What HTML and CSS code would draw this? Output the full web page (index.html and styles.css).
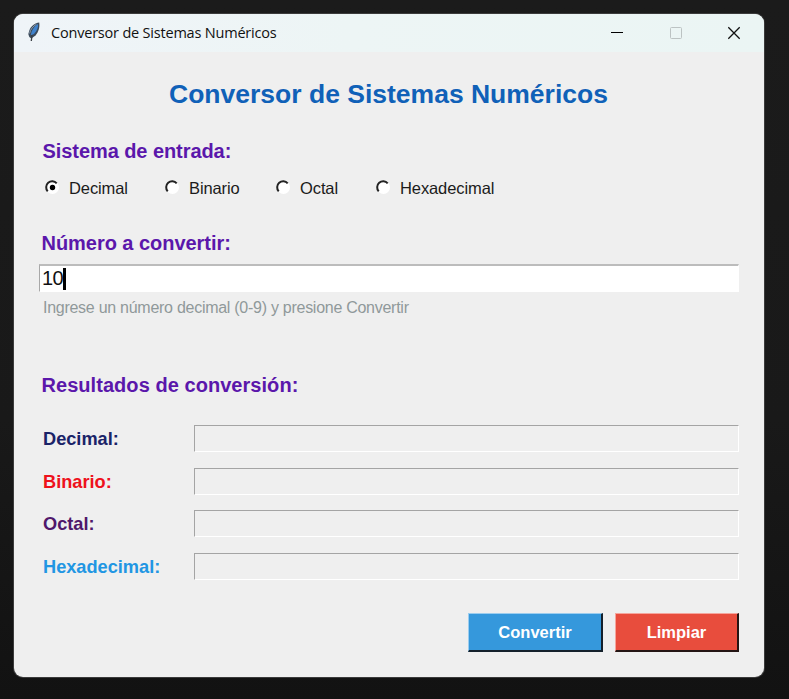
FILE: index.html
```html
<!DOCTYPE html>
<html lang="es">
<head>
<meta charset="utf-8">
<title>Conversor de Sistemas Numéricos</title>
<link rel="stylesheet" href="styles.css">
</head>
<body>
<main class="window">
  <header class="titlebar">
    <svg class="feather" width="14" height="20" viewBox="0 0 14 20">
      <path d="M12.200.5C8 1 4 4 2.500 8L1.300 12l1 3 2 1.500L8.500 13.500C11.500 10 13 5 12.200.5Z" fill="#3b4a5b"/>
      <path d="M11 2C7.500 4 4.500 8 3.800 13.200L7 12C10 9 11.500 5 11 2Z" fill="#3f82cc"/>
      <path d="M9.500 2.200C6 4.200 3.300 7.500 2.600 11.500" fill="none" stroke="#8a9aaa" stroke-width="1"/>
      <path d="M5 13L4.300 19" fill="none" stroke="#3a3f45" stroke-width="1.300"/>
    </svg>
    <span class="caption">Conversor de Sistemas Numéricos</span>
    <div class="controls">
      <svg width="14" height="14" viewBox="0 0 14 14"><path d="M1 6.500h12" stroke="#000"/></svg>
      <svg width="14" height="14" viewBox="0 0 14 14"><rect x="1.500" y="1.500" width="11" height="11" rx="1" fill="none" stroke="#bcc3c3"/></svg>
      <svg width="14" height="14" viewBox="0 0 14 14"><path d="M1.300 1.300l11.400 11.400M12.700 1.300L1.300 12.700" stroke="#111" stroke-width="1.300"/></svg>
    </div>
  </header>
  <section class="content">
    <h1>Conversor de Sistemas Numéricos</h1>
    <h2 class="h-input">Sistema de entrada:</h2>
    <div class="radios">
      <div class="radio"><svg class="dial" width="15" height="15" viewBox="0 0 15 15"><circle cx="7.500" cy="7.500" r="6.500" fill="#fff"/><path d="M2.700 11.300A6 6 0 0 1 11.700 3.300" fill="none" stroke="#222" stroke-width="2"/><circle cx="7.500" cy="7.500" r="2.700"/></svg>Decimal</div>
      <div class="radio"><svg class="dial" width="15" height="15" viewBox="0 0 15 15"><circle cx="7.500" cy="7.500" r="6.500" fill="#fff"/><path d="M2.700 11.300A6 6 0 0 1 11.700 3.300" fill="none" stroke="#222" stroke-width="2"/></svg>Binario</div>
      <div class="radio"><svg class="dial" width="15" height="15" viewBox="0 0 15 15"><circle cx="7.500" cy="7.500" r="6.500" fill="#fff"/><path d="M2.700 11.300A6 6 0 0 1 11.700 3.300" fill="none" stroke="#222" stroke-width="2"/></svg>Octal</div>
      <div class="radio"><svg class="dial" width="15" height="15" viewBox="0 0 15 15"><circle cx="7.500" cy="7.500" r="6.500" fill="#fff"/><path d="M2.700 11.300A6 6 0 0 1 11.700 3.300" fill="none" stroke="#222" stroke-width="2"/></svg>Hexadecimal</div>
    </div>
    <h2 class="h-number">Número a convertir:</h2>
    <div class="entry"><span>10</span><i class="caret"></i></div>
    <p class="hint">Ingrese un número decimal (0-9) y presione Convertir</p>
    <h2 class="h-results">Resultados de conversión:</h2>
    <div class="results">
      <span class="label decimal">Decimal:</span><div class="output"></div>
      <span class="label binario">Binario:</span><div class="output"></div>
      <span class="label octal">Octal:</span><div class="output"></div>
      <span class="label hexa">Hexadecimal:</span><div class="output"></div>
    </div>
    <div class="actions">
      <button class="btn convert">Convertir</button>
      <button class="btn clear">Limpiar</button>
    </div>
  </section>
</main>
</body>
</html>
```
FILE: styles.css
```css
* { box-sizing: border-box; }
body {
  margin: 0;
  height: 699px;
  padding: 14px;
  overflow: hidden;
  background: linear-gradient(#1b1b1b, #191919 60%, #121212);
  font-family: "Liberation Sans", Arial, sans-serif;
}
.window {
  width: 750px;
  height: 663px;
  border-radius: 9px;
  overflow: hidden;
  background: #efefef;
  box-shadow: 0 0 0 1px #3b3b3b;
}
.titlebar {
  height: 38px;
  display: flex;
  align-items: center;
  padding: 0 23px 0 13px;
  background: linear-gradient(90deg, #eff4f8, #edf5f5 45%, #ebf5f4);
}
.feather { margin-top: -2px; }
.caption {
  margin-left: 10px;
  font: 14.500px/20px "Open Sans", sans-serif;
  letter-spacing: -0.200px;
  color: #111;
  white-space: nowrap;
}
.controls { margin-left: auto; display: flex; gap: 44.500px; }
.content { padding: 24px 25px 0; }
h1, h2, p { margin: 0; white-space: nowrap; }
h1 {
  height: 36px;
  padding-right: 1px;
  font-size: 26.500px;
  line-height: 36px;
  text-align: center;
  color: #1061b8;
}
h2 {
  height: 24px;
  padding-left: 2.500px;
  font-size: 20px;
  line-height: 24px;
  color: #5b17ab;
}
.h-input { margin-top: 27px; padding-left: 3.500px; letter-spacing: -0.070px; }
.radios {
  display: grid;
  grid-template-columns: 120px 111px 100px 1fr;
  height: 20px;
  margin-top: 15px;
  padding-left: 6px;
}
.radio {
  display: flex;
  align-items: center;
  gap: 9px;
  font-size: 16.500px;
  line-height: 20px;
  letter-spacing: -0.100px;
  color: #1b1b1b;
}
.dial { margin-top: -2px; }
.h-number { margin-top: 33px; letter-spacing: -0.040px; }
.entry {
  display: flex;
  align-items: center;
  height: 28px;
  margin-top: 9px;
  padding-left: 2px;
  border: solid;
  border-width: 2px 1px 1px 1px;
  border-color: #bcbcbc #fff #fff #a8a8a8;
  background: #fff;
  font-size: 20px;
  letter-spacing: -0.500px;
  color: #111;
}
.caret { width: 3px; height: 22px; background: #000; }
.hint {
  margin-top: 6px;
  padding-left: 4px;
  font-size: 16px;
  line-height: 20px;
  letter-spacing: -0.270px;
  color: #8f999a;
}
.h-results { margin-top: 55px; letter-spacing: 0.050px; }
.results {
  display: grid;
  grid-template-columns: 155px 1fr;
  grid-auto-rows: 27px;
  row-gap: 15.500px;
  margin-top: 28px;
}
.label {
  padding-left: 4px;
  font-size: 18.200px;
  font-weight: bold;
  line-height: 29px;
}
.decimal { color: #1a2368; }
.binario { color: #ee111c; }
.octal { color: #50186b; }
.hexa { color: #2196e3; }
.output {
  border: 1px solid;
  border-color: #a4a4a4 #fff #fff #a4a4a4;
}
.actions {
  display: flex;
  justify-content: flex-end;
  gap: 12px;
  margin-top: 33px;
}
.btn {
  height: 39px;
  padding: 0;
  border: solid;
  border-width: 1px 2px 2px 1px;
  color: #fff;
  font: bold 16.500px/36px "Liberation Sans", Arial, sans-serif;
}
.convert { width: 135px; background: #3598dc; border-color: #9ccdef #14202b #14202b #9ccdef; }
.clear { width: 124px; background: #e84d3d; border-color: #f5a69d #241514 #241514 #f5a69d; }
```
